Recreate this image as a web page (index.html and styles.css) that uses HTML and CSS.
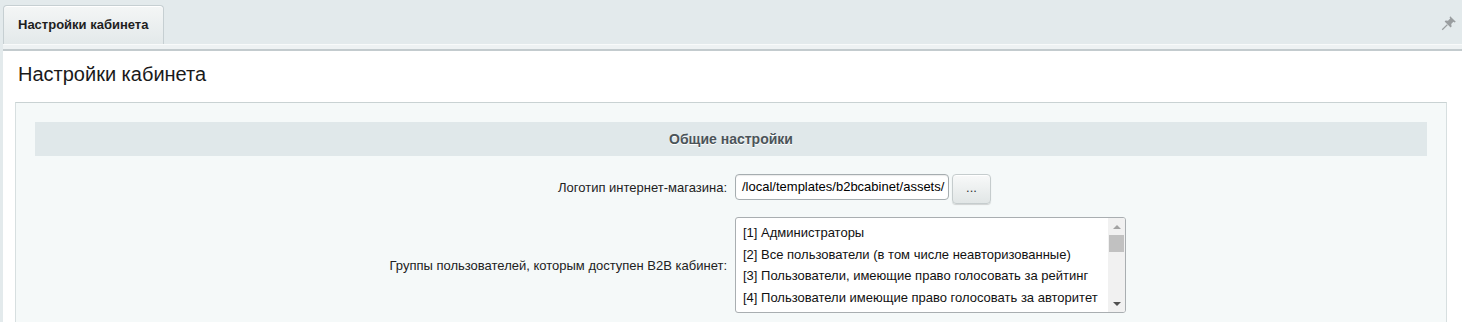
FILE: index.html
```
<!DOCTYPE html>
<html lang="ru">
<head>
<meta charset="utf-8">
<title>Настройки кабинета</title>
<link rel="stylesheet" href="styles.css">
</head>
<body>
<div class="page">
  <div class="tabbar">
    <div class="tab">Настройки кабинета</div>
    <svg class="pin" width="16" height="16" viewBox="0 0 16 16" aria-hidden="true">
      <g fill="#9a9ea0">
        <path d="M9.2 1.2 L14.8 6.8 L13.6 7.4 L12.4 6.8 L10.2 9 L10.6 11.4 L9.6 12.4 L3.6 6.4 L4.6 5.4 L7 5.8 L9.2 3.6 L8.6 2.4 Z"/>
      </g>
      <path d="M6.4 9.6 L1.2 14.8" stroke="#9a9ea0" stroke-width="1.3" fill="none"/>
    </svg>
  </div>
  <div class="band"></div>
  <div class="panel">
    <h1 class="title">Настройки кабинета</h1>
    <div class="box">
      <div class="section">Общие настройки</div>
      <div class="row row-logo">
        <div class="label">Логотип интернет-магазина:</div>
        <div class="field">
          <div class="input">/local/templates/b2bcabinet/assets/</div>
          <div class="btn">...</div>
        </div>
      </div>
      <div class="row row-groups">
        <div class="label">Группы пользователей, которым доступен B2B кабинет:</div>
        <div class="field">
          <div class="listbox">
            <div class="items">
              <div class="item">[1] Администраторы</div>
              <div class="item">[2] Все пользователи (в том числе неавторизованные)</div>
              <div class="item">[3] Пользователи, имеющие право голосовать за рейтинг</div>
              <div class="item">[4] Пользователи имеющие право голосовать за авторитет</div>
            </div>
            <div class="scrollbar">
              <div class="arrow up"></div>
              <div class="track"><div class="thumb"></div></div>
              <div class="arrow down"></div>
            </div>
          </div>
        </div>
      </div>
    </div>
  </div>
</div>
</body>
</html>
```
FILE: styles.css
```
* { box-sizing: border-box; }
html, body { margin: 0; padding: 0; }
body {
  background: #e3eaec;
  font-family: "Liberation Sans", Arial, sans-serif;
  font-size: 13px;
  color: #000;
  width: 1462px;
  height: 322px;
  overflow: hidden;
}
.page { padding-left: 3px; height: 322px; overflow: hidden; }
.tabbar {
  height: 44px;
  padding-top: 5px;
  display: flex;
  align-items: flex-end;
  justify-content: space-between;
}
.tab {
  width: 161px;
  height: 39px;
  border: 1px solid #c6cfd2;
  border-bottom: none;
  border-radius: 4px 4px 0 0;
  background: linear-gradient(#f4f6f6, #e3e9ea);
  font-weight: bold;
  font-size: 13px;
  color: #1e1e1e;
  padding-left: 14px;
  line-height: 38px;
  box-shadow: inset 0 1px 0 #fff;
}
.pin { margin: 0 5px 13px 0; align-self: flex-end; }
.band {
  height: 7px;
  background: #eef2f3;
  border-top: 1px solid #f8fafa;
  border-bottom: 2px solid #c3cbce;
}
.panel {
  background: #fff;
  padding: 11px 15px 0 12px;
  height: 271px;
  overflow: hidden;
}
.title {
  margin: 0 0 16px 3px;
  font-weight: normal;
  font-size: 20px;
  line-height: 24px;
  color: #1a1a1a;
}
.box {
  background: #f5f9f9;
  border: 1px solid #d7dfe0;
  border-top-color: #c9d2d3;
  border-bottom: none;
  padding: 19px 19px 0;
  height: 220px;
}
.section {
  height: 34px;
  line-height: 34px;
  background: #e0e8ea;
  text-align: center;
  font-weight: bold;
  font-size: 14px;
  color: #4b5459;
  text-shadow: 0 1px 0 #fff;
}
.row {
  display: grid;
  grid-template-columns: 1fr 1fr;
  align-items: center;
}
.row-logo { margin-top: 18px; height: 30px; }
.row-groups { margin-top: 13px; }
.label {
  text-align: right;
  padding-right: 4px;
  color: #222;
}
.row-logo .label { padding-bottom: 3px; }
.field {
  display: flex;
  align-items: flex-start;
  gap: 3px;
  padding-left: 4px;
}
.input {
  width: 214px;
  height: 26px;
  border: 1px solid #a6adb0;
  border-radius: 4px;
  background: #fff;
  padding: 0 6px;
  line-height: 24px;
  white-space: nowrap;
  overflow: hidden;
  box-shadow: inset 0 1px 1px rgba(0,0,0,0.08);
  color: #000;
}
.btn {
  width: 39px;
  height: 30px;
  border: 1px solid #c5cccd;
  border-radius: 4px;
  background: linear-gradient(#f8f9f9, #e1e6e6);
  box-shadow: 0 1px 1px rgba(0,0,0,0.15), inset 0 1px 0 #fff;
  text-align: center;
  line-height: 26px;
  font-size: 13px;
  color: #333;
}
.listbox {
  width: 391px;
  height: 96px;
  border: 1px solid #a9aeb1;
  border-radius: 3px;
  background: #fff;
  display: flex;
  overflow: hidden;
}
.items {
  flex: 1;
  padding: 4px 0 0 7px;
  white-space: nowrap;
  overflow: hidden;
}
.item {
  height: 21.5px;
  line-height: 21px;
  color: #111;
}
.scrollbar {
  width: 17px;
  background: #f1f1f1;
  display: flex;
  flex-direction: column;
}
.arrow { height: 17px; position: relative; }
.arrow::after {
  content: "";
  position: absolute;
  left: 5px;
  width: 0; height: 0;
  border-left: 4px solid transparent;
  border-right: 4px solid transparent;
}
.arrow.up::after { top: 7px; border-bottom: 4px solid #a3a3a3; }
.arrow.down::after { top: 7px; border-top: 4px solid #505050; }
.track { flex: 1; padding: 0 1px; }
.thumb { height: 17px; background: #c1c1c1; }
```
